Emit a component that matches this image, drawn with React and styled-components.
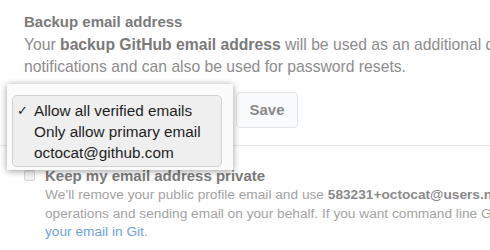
import React from 'react'
import styled, { createGlobalStyle } from 'styled-components'

const Global = createGlobalStyle`
  html, body {
    margin: 0;
    padding: 0;
    background: #fff;
    overflow: hidden;
  }
  body {
    font-family: "Liberation Sans", Arial, sans-serif;
  }
`

const Page = styled.div`
  position: relative;
  width: 490px;
  height: 250px;
  overflow: hidden;
  padding: 12px 0 0 24px;
  box-sizing: border-box;
`

const Heading = styled.h3`
  margin: 0;
  font-size: 15px;
  font-weight: 700;
  line-height: 20px;
  color: #7a7a7a;
`

const Lead = styled.p`
  margin: 2px 0 0;
  font-size: 15.7px;
  line-height: 22px;
  color: #8c8c8c;
  white-space: nowrap;
  b { color: #7a7a7a; }
`

const FormRow = styled.div`
  display: flex;
  align-items: center;
  gap: 6px;
  margin-top: 13px;
  margin-left: -2px;
`

const Select = styled.div`
  width: 208px;
  height: 37px;
  box-sizing: border-box;
  border: 1px solid #2f86f0;
  border-radius: 3px;
  box-shadow: 0 0 0 1px rgba(47, 134, 240, 0.3);
  background: #fff;
`

const Button = styled.button`
  width: 62px;
  height: 36px;
  border: 1px solid #e4e6e9;
  border-radius: 4px;
  background: #fafbfc;
  color: #8a8a8a;
  font-family: inherit;
  font-size: 15px;
  font-weight: 700;
  padding: 0;
`

const Divider = styled.hr`
  margin: 17px 0 0 -24px;
  border: 0;
  border-top: 1px solid #e6e6e6;
`

const Option = styled.div`
  display: flex;
  gap: 10px;
  margin-top: 21px;
`

const Check = styled.span`
  width: 11px;
  height: 11px;
  margin-top: 3px;
  box-sizing: border-box;
  border: 1px solid #d4d4d4;
  border-radius: 2px;
  background: #f2f2f2;
  flex-shrink: 0;
`

const OptionBody = styled.div`
  white-space: nowrap;
`

const OptionTitle = styled.div`
  font-size: 15px;
  font-weight: 700;
  line-height: 17px;
  color: #7a7a7a;
`

const Note = styled.p`
  margin: 2px 0 0;
  font-size: 13.7px;
  line-height: 18.5px;
  color: #a3a3a3;
  b { color: #8a8a8a; }
  a { color: #729ee0; text-decoration: none; }
`

const Popup = styled.div`
  position: absolute;
  left: 7px;
  top: 84px;
  width: 226px;
  height: 86px;
  background: #fbfbfb;
  box-shadow: 0 1px 7px rgba(0, 0, 0, 0.4);
`

const Menu = styled.ul`
  position: absolute;
  left: 5px;
  top: 11px;
  width: 210px;
  height: 72px;
  margin: 0;
  padding: 4px 0 0;
  box-sizing: border-box;
  list-style: none;
  background: #efefef;
  border: 1px solid #d2d2d2;
  border-radius: 5px;
`

const Item = styled.li`
  display: flex;
  align-items: center;
  height: 21px;
  padding-left: 4px;
  font-size: 15.3px;
  color: #1e1e1e;
`

const Tick = styled.span`
  width: 17px;
  font-size: 13px;
`

const App = () => (
  <>
    <Global />
    <Page>
      <Heading>Backup email address</Heading>
      <Lead>
        Your <b>backup GitHub email address</b> will be used as an additional destination for security-relevant account
        <br />
        notifications and can also be used for password resets.
      </Lead>
      <FormRow>
        <Select />
        <Button>Save</Button>
      </FormRow>
      <Divider />
      <Option>
        <Check />
        <OptionBody>
          <OptionTitle>Keep my email address private</OptionTitle>
          <Note>
            We’ll remove your public profile email and use <b>583231+octocat@users.noreply.github.com</b> when performing web-based Git
            <br />
            operations and sending email on your behalf. If you want command line Git operations to use your private email you must set
            <br />
            <a href="#">your email in Git</a>.
          </Note>
        </OptionBody>
      </Option>
      <Popup>
        <Menu>
          <Item><Tick>✓</Tick>Allow all verified emails</Item>
          <Item><Tick />Only allow primary email</Item>
          <Item><Tick />octocat@github.com</Item>
        </Menu>
      </Popup>
    </Page>
  </>
)

export default App
